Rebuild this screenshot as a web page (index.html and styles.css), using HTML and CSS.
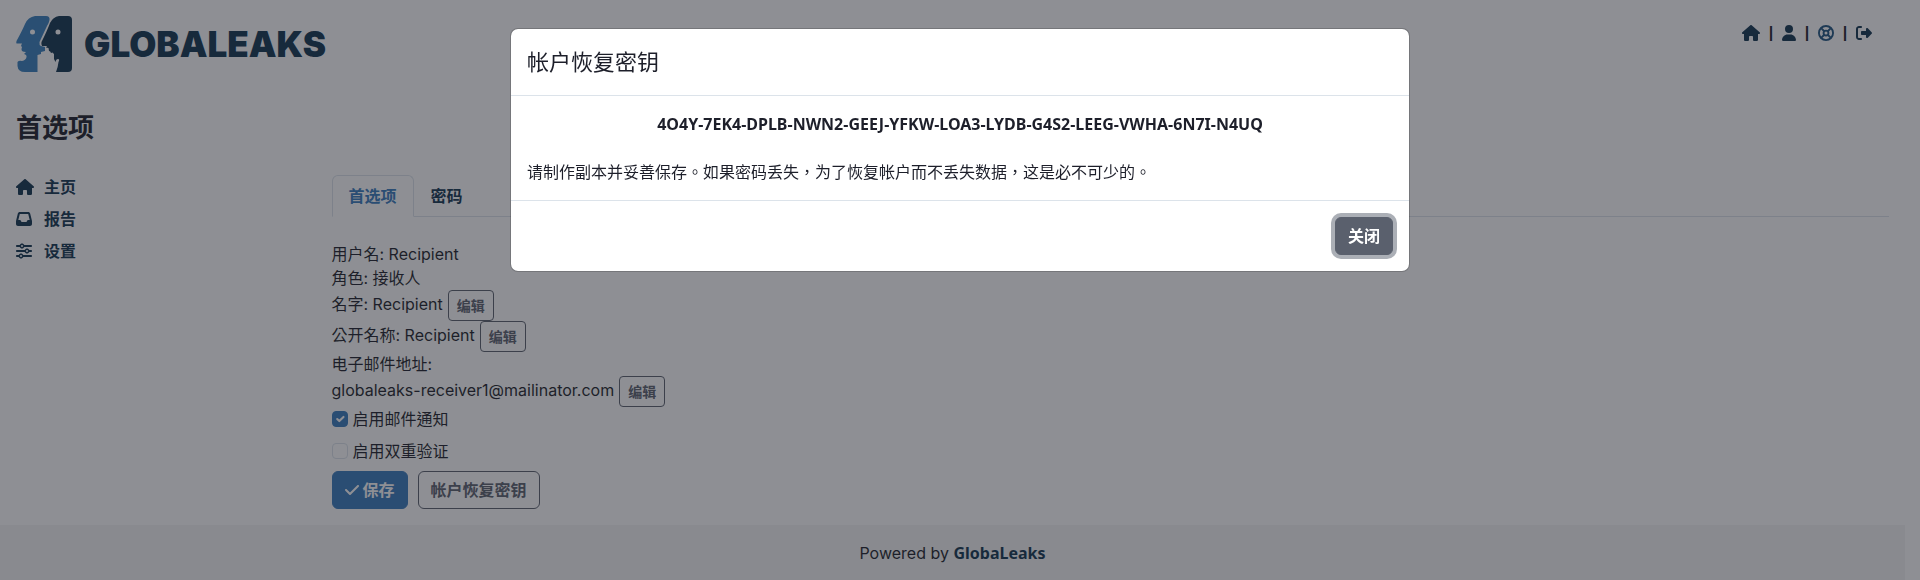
FILE: index.html
```html
<!DOCTYPE html>
<html lang="zh-Hant">
<head>
<meta charset="utf-8">
<meta name="viewport" content="width=device-width, initial-scale=1">
<title>GlobaLeaks</title>
<link rel="stylesheet" href="styles.css">
</head>
<body>
<svg class="sprite" aria-hidden="true">
  <symbol id="house" viewBox="0 0 576 512"><path d="M575.8 255.5c0 18-15 32.1-32 32.1l-32 0 .7 160.2c0 2.7-.2 5.4-.5 8.1l0 16.2c0 22.1-17.9 40-40 40l-16 0c-1.1 0-2.2 0-3.3-.1c-1.4 .1-2.8 .1-4.2 .1L416 512l-24 0c-22.1 0-40-17.9-40-40l0-24 0-64c0-17.7-14.3-32-32-32l-64 0c-17.7 0-32 14.3-32 32l0 64 0 24c0 22.1-17.9 40-40 40l-24 0-31.9 0c-1.5 0-3-.1-4.5-.2c-1.2 .1-2.4 .2-3.6 .2l-16 0c-22.1 0-40-17.9-40-40l0-112c0-.9 0-1.9 .1-2.8l0-69.7-32 0c-18 0-32-14-32-32.1c0-9 3-17 10-24L266.4 8c7-7 15-8 22-8s15 2 21 7L564.8 231.5c8 7 12 15 11 24z"/></symbol>
  <symbol id="user" viewBox="0 0 448 512"><path d="M224 256A128 128 0 1 0 224 0a128 128 0 1 0 0 256zm-45.7 48C79.8 304 0 383.8 0 482.3C0 498.7 13.3 512 29.7 512l388.6 0c16.4 0 29.7-13.3 29.7-29.7C448 383.8 368.2 304 269.7 304l-91.4 0z"/></symbol>
  <symbol id="ring" viewBox="0 0 512 512"><g fill="none" stroke="currentColor" stroke-width="60"><circle cx="256" cy="256" r="226"/><circle cx="256" cy="256" r="78"/><path d="M100 100L200 200M412 100L312 200M100 412L200 312M412 412L312 312"/></g></symbol>
  <symbol id="exit" viewBox="0 0 512 512"><path d="M377.9 105.9L500.7 228.7c7.2 7.2 11.3 17.1 11.3 27.3s-4.1 20.1-11.3 27.3L377.9 406.1c-6.4 6.4-15 9.9-24 9.9c-18.7 0-33.9-15.2-33.9-33.9l0-62.1-128 0c-17.7 0-32-14.3-32-32l0-64c0-17.7 14.3-32 32-32l128 0 0-62.1c0-18.7 15.2-33.9 33.9-33.9c9 0 17.6 3.6 24 9.9zM160 96L96 96c-17.7 0-32 14.3-32 32l0 256c0 17.7 14.3 32 32 32l64 0c17.7 0 32 14.3 32 32s-14.3 32-32 32l-64 0c-53 0-96-43-96-96L0 128C0 75 43 32 96 32l64 0c17.7 0 32 14.3 32 32s-14.3 32-32 32z"/></symbol>
  <symbol id="inbox" viewBox="0 0 512 512"><path d="M121 32C91.6 32 66 52 58.9 80.5L1.9 308.4C.6 313.5 0 318.7 0 323.9L0 416c0 35.3 28.7 64 64 64l384 0c35.3 0 64-28.7 64-64l0-92.1c0-5.2-.6-10.4-1.9-15.5l-57-227.9C446 52 420.4 32 391 32L121 32zm0 64l270 0 48 192-51.2 0c-12.1 0-23.2 6.8-28.6 17.7l-14.3 28.6c-5.4 10.8-16.5 17.7-28.6 17.7l-120.4 0c-12.1 0-23.2-6.8-28.6-17.7l-14.3-28.6c-5.4-10.8-16.5-17.7-28.6-17.7L73 288 121 96z"/></symbol>
  <symbol id="sliders" viewBox="0 0 512 512"><path d="M0 416c0 17.7 14.3 32 32 32l54.7 0c12.3 28.3 40.5 48 73.3 48s61-19.7 73.3-48L480 448c17.7 0 32-14.3 32-32s-14.3-32-32-32l-246.7 0c-12.3-28.3-40.5-48-73.3-48s-61 19.7-73.3 48L32 384c-17.7 0-32 14.3-32 32zm128 0a32 32 0 1 1 64 0 32 32 0 1 1 -64 0zM320 256a32 32 0 1 1 64 0 32 32 0 1 1 -64 0zm32-80c-32.8 0-61 19.7-73.3 48L32 224c-17.7 0-32 14.3-32 32s14.3 32 32 32l246.7 0c12.3 28.3 40.5 48 73.3 48s61-19.7 73.3-48l54.7 0c17.7 0 32-14.3 32-32s-14.3-32-32-32l-54.7 0c-12.3-28.3-40.5-48-73.3-48zM192 128a32 32 0 1 1 0-64 32 32 0 1 1 0 64zm73.3-64C253 35.7 224.8 16 192 16s-61 19.7-73.3 48L32 64C14.3 64 0 78.3 0 96s14.3 32 32 32l86.7 0c12.3 28.3 40.5 48 73.3 48s61-19.7 73.3-48L480 128c17.7 0 32-14.3 32-32s-14.3-32-32-32L265.3 64z"/></symbol>
  <symbol id="check" viewBox="0 0 448 512"><path d="M438.6 105.4c12.5 12.5 12.5 32.8 0 45.3l-256 256c-12.5 12.5-32.8 12.5-45.3 0l-128-128c-12.5-12.5-12.5-32.8 0-45.3s32.8-12.5 45.3 0L160 338.7 393.4 105.4c12.5-12.5 32.8-12.5 45.3 0z"/></symbol>
</svg>
<div class="page">
  <header class="header">
    <a class="logo" href="#">
      <svg class="logo-mark" viewBox="0 0 56 56" aria-hidden="true">
        <path fill="#377fbc" fill-rule="evenodd" d="M19 0H30Q34 0 33.500 4Q33 7 31 10L23.500 26Q23 29 25 30L29 31V35L25 36V38L21.500 39V56H9Q2 56 1.500 50V46Q3 44 6 45Q10 44 10.500 41Q11 39 8 38L10 36Q5 36 5.500 33L6 31L5 30Q5.500 28 6 27.500H0.500Q0 27 0.500 25Q6 15 9 8Q12 1 19 0ZM16.500 13.500a2.500 2.500 0 1 0 0 5a2.500 2.500 0 1 0 0-5Z"/>
        <path fill="#11344f" fill-rule="evenodd" d="M43 0H52Q56 0 56 4V52Q56 56 52 56H40Q42 51 42.500 46Q44 43 42 43Q40 43 39.500 46L38 43Q38 40 38 38L36.500 36.500L35 37Q34.500 35 33 35L32.500 32L30 31.500L31 30H26Q25 28 25.500 26Q31 15 34 7Q37 1 43 0ZM42 13.500a2.500 2.500 0 1 0 0 5a2.500 2.500 0 1 0 0-5Z"/>
      </svg>
      <span class="logo-text">GLOBALEAKS</span>
    </a>
    <nav class="tools" aria-label="账户">
      <a href="#" aria-label="主页"><svg class="icon wide"><use href="#house"/></svg></a><span>|</span>
      <a href="#" aria-label="首选项"><svg class="icon slim"><use href="#user"/></svg></a><span>|</span>
      <a class="help" href="#" aria-label="帮助"><svg class="icon"><use href="#ring"/></svg></a><span>|</span>
      <a href="#" aria-label="退出"><svg class="icon"><use href="#exit"/></svg></a>
    </nav>
  </header>
  <h1 class="title">首选项</h1>
  <div class="columns">
    <nav class="sidebar">
      <a href="#"><svg class="icon wide"><use href="#house"/></svg>主页</a>
      <a href="#"><svg class="icon"><use href="#inbox"/></svg>报告</a>
      <a href="#"><svg class="icon"><use href="#sliders"/></svg>设置</a>
    </nav>
    <main class="content">
      <nav class="tabs">
        <a class="tab active" href="#">首选项</a>
        <a class="tab" href="#">密码</a>
      </nav>
      <form class="prefs">
        <div class="row">用户名: Recipient</div>
        <div class="row">角色: 接收人</div>
        <div class="row edit">名字: Recipient <button type="button" class="btn small outline">编辑</button></div>
        <div class="row edit">公开名称: Recipient <button type="button" class="btn small outline">编辑</button></div>
        <div class="row">电子邮件地址:</div>
        <div class="row edit">globaleaks-receiver1@mailinator.com <button type="button" class="btn small outline">编辑</button></div>
        <label class="check"><input type="checkbox" checked>启用邮件通知</label>
        <label class="check"><input type="checkbox">启用双重验证</label>
        <div class="actions">
          <button type="button" class="btn primary"><svg class="icon slim"><use href="#check"/></svg>保存</button>
          <button type="button" class="btn outline">帐户恢复密钥</button>
        </div>
      </form>
    </main>
  </div>
  <footer class="footer">Powered by&nbsp;<a href="#">GlobaLeaks</a></footer>
</div>
<div class="backdrop">
  <section class="modal" role="dialog" aria-modal="true" aria-labelledby="modal-title">
    <h2 class="modal-header" id="modal-title">帐户恢复密钥</h2>
    <div class="modal-body">
      <p class="key">4O4Y-7EK4-DPLB-NWN2-GEEJ-YFKW-LOA3-LYDB-G4S2-LEEG-VWHA-6N7I-N4UQ</p>
      <p>请制作副本并妥善保存。如果密码丢失，为了恢复帐户而不丢失数据，这是必不可少的。</p>
    </div>
    <div class="modal-footer"><button type="button" class="btn close">关闭</button></div>
  </section>
</div>
</body>
</html>
```
FILE: styles.css
```css
* { box-sizing: border-box; }

body {
  margin: 0;
  background: #fff;
  color: #1d1f2a;
  font: 16px/24px Inter, "Noto Sans CJK TC", sans-serif;
}

a { color: #11344f; text-decoration: none; }
h1, h2, p { margin: 0; }

.sprite { display: none; }
.icon { width: 16px; height: 16px; fill: currentColor; flex: none; }
.icon.wide { width: 18px; }
.icon.slim { width: 14px; }

.page {
  display: flex;
  flex-direction: column;
  min-height: 100vh;
  padding-right: 15px;
}

.header {
  display: flex;
  justify-content: space-between;
  align-items: flex-start;
  padding: 16px 33px 0 16px;
}
.logo { display: flex; align-items: center; gap: 12px; }
.logo-mark { width: 56px; height: 56px; }
.logo-text { font: 900 35px/56px Inter, sans-serif; }

.tools { display: flex; align-items: center; gap: 8px; padding-top: 5px; }
.tools a { display: flex; }
.tools .help { color: #1f5580; }
.tools span { width: 6px; text-align: center; font-family: "Liberation Sans", sans-serif; font-weight: bold; }

.title {
  padding: 37px 16px 0;
  font: bold 26px/36px "Noto Sans", "Noto Sans CJK TC", sans-serif;
}

.columns { display: grid; grid-template-columns: 1fr 5fr; padding-top: 30px; }

.sidebar { display: flex; flex-direction: column; padding-left: 16px; gap: 8px; }
.sidebar a {
  display: flex;
  align-items: center;
  font-family: "Noto Sans", "Noto Sans CJK TC", sans-serif;
  font-weight: bold;
}
.sidebar .icon { margin-right: 12px; }
.sidebar .icon.wide { margin-right: 10px; }

.content { padding: 0 16px 0 14px; }
.tabs { display: flex; border-bottom: 1px solid #dce3ea; }
.tab {
  padding: 8px 16px;
  margin-bottom: -1px;
  border: 1px solid transparent;
  border-radius: 6px 6px 0 0;
  font-family: "Noto Sans", "Noto Sans CJK TC", sans-serif;
  font-weight: bold;
}
.tab.active {
  color: #377abc;
  background: #fff;
  border-color: #dce3ea #dce3ea #fff;
}

.prefs { padding: 25px 0 16px; }
.row { display: flex; align-items: center; gap: 5px; }
.row.edit { align-items: flex-start; line-height: 28px; }

.btn {
  display: inline-flex;
  align-items: center;
  justify-content: center;
  gap: 4px;
  height: 38px;
  padding: 0 12px;
  border: 1px solid;
  border-radius: 6px;
  background: transparent;
  font: bold 16px/24px "Noto Sans", "Noto Sans CJK TC", sans-serif;
}
.btn.small { height: 31px; padding: 0 8px; border-radius: 4px; font-size: 14px; }
.btn.outline { color: #5a606d; border-color: #5a606d; }
.btn.primary { color: #fff; background: #377abc; border-color: #377abc; }
.btn.close {
  color: #fff;
  background: #5a606d;
  border-color: #5a606d;
  box-shadow: 0 0 0 4px #abafb6;
}

.check { display: flex; align-items: center; gap: 5px; padding-bottom: 8px; }
.check input {
  appearance: none;
  width: 16px;
  height: 16px;
  margin: 0;
  border: 1px solid #dce3ea;
  border-radius: 4px;
}
.check input:checked {
  border-color: #377abc;
  background: #377abc url("data:image/svg+xml,%3Csvg xmlns='http://www.w3.org/2000/svg' viewBox='0 0 20 20'%3E%3Cpath fill='none' stroke='%23fff' stroke-linecap='round' stroke-linejoin='round' stroke-width='3' d='m6 10 3 3 6-6'/%3E%3C/svg%3E");
}

.actions { display: flex; gap: 10px; }

.footer {
  display: flex;
  flex: 1;
  align-items: center;
  justify-content: center;
  background: #f4f4f4;
}
.footer a { font-family: "Noto Sans", sans-serif; font-weight: bold; }

.backdrop { position: fixed; inset: 0; padding: 28px 16px; background: rgba(29, 31, 42, .5); }
.modal {
  max-width: 900px;
  margin: 0 auto;
  border: 1px solid rgba(0, 0, 0, .175);
  border-radius: 8px;
  background: #fff;
  background-clip: padding-box;
}
.modal-header {
  padding: 16px;
  border-bottom: 1px solid #dce3ea;
  font-size: 22px;
  line-height: 34px;
  font-weight: normal;
}
.modal-body { padding: 16px; }
.key {
  margin-bottom: 24px;
  text-align: center;
  font-family: "Noto Sans", sans-serif;
  font-weight: bold;
}
.modal-footer {
  display: flex;
  justify-content: flex-end;
  padding: 16px;
  border-top: 1px solid #dce3ea;
}
```
